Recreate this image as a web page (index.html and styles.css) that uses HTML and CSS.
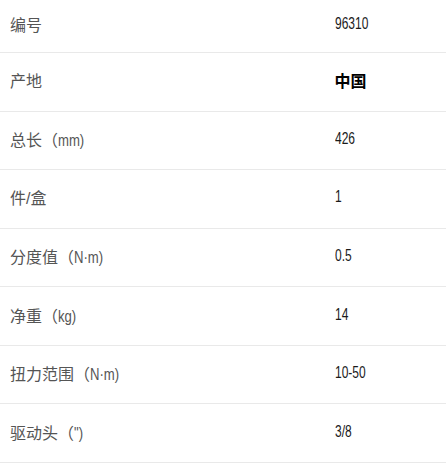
FILE: index.html
```html
<!DOCTYPE html>
<html lang="zh">
<head>
<meta charset="utf-8">
<link rel="stylesheet" href="styles.css">
</head>
<body>
<div class="specs">
  <div class="row first"><div class="label">编号</div><div class="value"><span class="num">96310</span></div></div>
  <div class="row"><div class="label">产地</div><div class="value cjk">中国</div></div>
  <div class="row"><div class="label">总长（<span class="unit">mm)</span></div><div class="value"><span class="num">426</span></div></div>
  <div class="row"><div class="label">件/盒</div><div class="value"><span class="num">1</span></div></div>
  <div class="row"><div class="label">分度值（<span class="unit">N·m)</span></div><div class="value"><span class="num">0.5</span></div></div>
  <div class="row"><div class="label">净重（<span class="unit">kg)</span></div><div class="value"><span class="num">14</span></div></div>
  <div class="row"><div class="label">扭力范围（<span class="unit">N·m)</span></div><div class="value"><span class="num">10-50</span></div></div>
  <div class="row"><div class="label">驱动头（<span class="unit">")</span></div><div class="value"><span class="num">3/8</span></div></div>
</div>
</body>
</html>
```

FILE: styles.css
```css
html, body {
  margin: 0;
  padding: 0;
  background: #fff;
}
.specs {
  width: 446px;
  display: flex;
  flex-direction: column;
}
.row {
  box-sizing: border-box;
  height: 58.57px;
  border-bottom: 1px solid #e9e9e9;
  display: grid;
  grid-template-columns: 75% 25%;
  align-items: center;
  padding-bottom: 3px;
}
.row.first {
  height: 53px;
  padding-bottom: 4px;
}
.label {
  padding-left: 10px;
  font-family: "Liberation Sans", "Noto Sans CJK SC", sans-serif;
  font-size: 16px;
  color: #555;
  white-space: nowrap;
}
.unit {
  display: inline-block;
  transform: scaleX(0.82);
  transform-origin: left center;
}
.value {
  font-family: "Liberation Sans", "Noto Sans CJK SC", sans-serif;
  font-size: 16px;
  color: #1a1a1a;
}
.num {
  display: inline-block;
  transform: scaleX(0.75);
  transform-origin: left center;
}
.value.cjk {
  font-family: "Noto Sans CJK SC", sans-serif;
  font-weight: bold;
  color: #000;
}
```
